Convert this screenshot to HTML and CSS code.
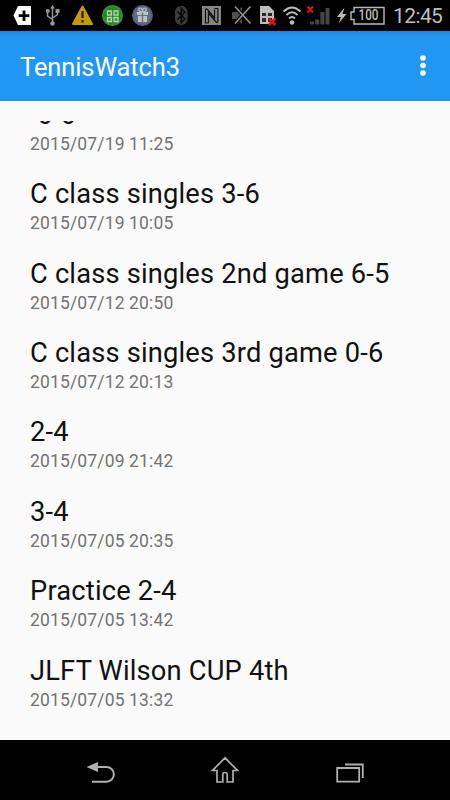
FILE: index.html
```html
<!DOCTYPE html>
<html lang="en">
<head>
<meta charset="utf-8">
<title>TennisWatch3</title>
<link rel="stylesheet" href="styles.css">
</head>
<body>
<div class="screen">
  <header class="status">
    <svg class="notifications" width="160" height="31" viewBox="0 0 160 31">
      <path d="M13.500 15.500 18 6H31V25H18Z" fill="#fff"/>
      <path d="M24 10.500V21M18.700 15.700H29.300" stroke="#000" stroke-width="2.800"/>
      <g stroke="#969696" stroke-width="1.500" fill="none">
        <path d="M52.500 7V23M47.500 11V16L52.500 19.500M57.500 11V14.500L52.500 18"/>
      </g>
      <path d="M50 8.500 52.500 5 55 8.500ZM55.500 9H59.500V13H55.500Z" fill="#969696"/>
      <circle cx="47.800" cy="11" r="2" fill="#969696"/><circle cx="52.500" cy="23.500" r="2.300" fill="#969696"/>
      <path d="M82.500 6.500 92 24H73Z" fill="#c49a06" stroke="#c49a06" stroke-width="2" stroke-linejoin="round"/>
      <path d="M82.500 11V18M82.500 20V22.500" stroke="#251d00" stroke-width="2.200"/>
      <defs>
        <radialGradient id="green"><stop offset="0" stop-color="#168c12"/><stop offset=".72" stop-color="#178c16"/><stop offset="1" stop-color="#498f48"/></radialGradient>
        <radialGradient id="gray"><stop offset="0" stop-color="#647089"/><stop offset=".7" stop-color="#667087"/><stop offset="1" stop-color="#4b5970"/></radialGradient>
      </defs>
      <circle cx="112.500" cy="15.500" r="10.500" fill="url(#green)"/>
      <path d="M107.500 11H111.500V15H107.500ZM114 11H118V15H114ZM107.500 17.500H111.500V21.500H107.500ZM114 17.500H118V21.500H114Z" fill="#289321" stroke="#bdd0bb" stroke-width="1.300"/>
      <circle cx="142.500" cy="15.500" r="10.500" fill="url(#gray)"/>
      <path d="M137 12H148V15H137ZM138 16H147V22H138Z" fill="#bfc1c6"/>
      <path d="M142.500 12V22" stroke="#69748a" stroke-width="1.500"/>
      <path d="M142.500 12C138 12 138 8 140 8S142.500 10 142.500 12C142.500 10 143 8 145 8S147 12 142.500 12" fill="none" stroke="#bfc1c6" stroke-width="1.200"/>
    </svg>
    <svg class="indicators" width="217" height="31" viewBox="170 0 217 31">
      <rect x="175" y="6" width="12.500" height="19" rx="6" fill="#3c3c3c"/>
      <path d="M177.500 11.500 185 19 181.200 22.500V8.500L185 12 177.500 19.500" fill="none" stroke="#080808" stroke-width="1.500"/>
      <rect x="202" y="6" width="19" height="19" fill="#858585"/>
      <path d="M208.500 23H205.500V9.500Q206 8 207.500 9.500L214.500 18V9.500M208.500 23V13L215.500 21.500Q217.500 23.500 217.800 21.500V8.500H214.500" fill="none" stroke="#101010" stroke-width="1.200"/>
      <path d="M232 12H236L242 7V24L236 19H232Z" fill="#505050"/>
      <path d="M235 6.500 250.500 23.500M250.500 6.500 235 23.500" stroke="#000" stroke-width="4"/>
      <path d="M235 6.500 250.500 23.500M250.500 6.500 235 23.500" stroke="#929292" stroke-width="1.700"/>
      <path d="M260 6H269L274 11V24H260Z" fill="#bcbcbc"/>
      <path d="M262 13H266V16H262ZM268 13H272V16H268ZM262 18H266V22H262ZM268 18H272V22H268Z" fill="#292929"/>
      <path d="M269 18.500 275.500 25M275.500 18.500 269 25" stroke="#d91414" stroke-width="2.500"/>
      <g fill="none" stroke="#bababa" stroke-width="2">
        <path d="M283.500 11.500Q292 3.500 300.500 11.500M286.500 15Q292 9.500 297.500 15M289 18.500Q292 15.500 295 18.500"/>
      </g>
      <circle cx="292" cy="22.500" r="2.300" fill="#bababa"/>
      <path d="M310 21.500H314V24.500H310ZM315.200 19.500H319.200V24.500H315.200ZM320.400 12H324.400V24.500H320.400ZM325.500 8H329.500V24.500H325.500Z" fill="#454545"/>
      <path d="M307.500 6.500 313 12.500M313 6.500 307.500 12.500" stroke="#e31414" stroke-width="2"/>
      <path d="M344.500 7.500 337 17H341L338.500 23.500 346.500 14H342.500Z" fill="#bcbcbc"/>
      <path d="M354 7.500H384V24H354V19.500H351V12H354Z" fill="none" stroke="#b8b8b8" stroke-width="1.400"/>
      <text class="battery" x="358.500" y="20" textLength="20" lengthAdjust="spacingAndGlyphs">100</text>
    </svg>
    <span class="clock">12:45</span>
  </header>
  <div class="toolbar">
    <h1>TennisWatch3</h1>
    <svg width="10" height="24" viewBox="0 0 10 24" fill="#fff"><circle cx="5" cy="4" r="2.800"/><circle cx="5" cy="11.500" r="2.800"/><circle cx="5" cy="19" r="2.800"/></svg>
  </div>
  <main class="content">
    <ul class="list">
      <li><h2> 6-6</h2><time>2015/07/19 11:25</time></li>
      <li><h2>C class singles 3-6</h2><time>2015/07/19 10:05</time></li>
      <li><h2>C class singles 2nd game 6-5</h2><time>2015/07/12 20:50</time></li>
      <li><h2>C class singles 3rd game 0-6</h2><time>2015/07/12 20:13</time></li>
      <li><h2>2-4</h2><time>2015/07/09 21:42</time></li>
      <li><h2>3-4</h2><time>2015/07/05 20:35</time></li>
      <li><h2>Practice 2-4</h2><time>2015/07/05 13:42</time></li>
      <li><h2>JLFT Wilson CUP 4th</h2><time>2015/07/05 13:32</time></li>
    </ul>
  </main>
  <nav class="nav">
    <svg width="30" height="30" viewBox="85 756 30 30"><path d="M92 767H106.500A7.200 7.200 0 0 1 106.500 781.700H92" fill="none" stroke="#b0b0b0" stroke-width="2"/><path d="M86.500 767 98 762V772Z" fill="#b0b0b0"/></svg>
    <svg width="30" height="30" viewBox="210 756 30 30"><path d="M225 757.800 212.500 770.500H217V782H222.800V774.500Q222.800 772.500 225 772.500T227.200 774.500V782H233V770.500H237.500Z" fill="none" stroke="#b0b0b0" stroke-width="1.700"/></svg>
    <svg width="30" height="30" viewBox="335 756 30 30"><path d="M337.200 768H359.200V781.700H337.200ZM345 764.500H362.800V778" fill="none" stroke="#b0b0b0" stroke-width="1.800"/></svg>
  </nav>
</div>
</body>
</html>
```
FILE: styles.css
```css
* { box-sizing: border-box; margin: 0; padding: 0; }
body { font-family: Roboto, sans-serif; background: #fafafa; }
svg { display: block; flex: none; }
.screen { width: 450px; height: 800px; display: flex; flex-direction: column; overflow: hidden; }
.status { height: 31px; flex: none; background: #000; display: flex; }
.indicators { margin-left: 10px; }
.battery { font: 500 14px Roboto, sans-serif; fill: #bcbcbc; }
.clock { margin-left: 6px; color: #bebebe; font-size: 21px; line-height: 32px; letter-spacing: -0.6px; }
.toolbar { height: 70px; flex: none; background: linear-gradient(#1b85d8, #2196f3 5px, #2196f3 69px, #1c8de8); display: flex; align-items: center; justify-content: space-between; padding: 0 22.5px 0 20px; color: #fff; }
.toolbar h1 { font-size: 25.5px; font-weight: 400; line-height: 32px; padding-top: 2px; letter-spacing: -0.1px; }
.content { flex: 1; min-height: 0; padding-top: 20px; background: #fafafa; }
.list { height: 619px; overflow: hidden; list-style: none; padding-left: 30px; display: flex; flex-direction: column; }
.list li { height: 79.4px; flex: none; }
.list li:first-child { margin-top: -24.2px; }
.list h2 { font-size: 27.3px; font-weight: 400; line-height: 36px; height: 36px; color: #111; white-space: pre; letter-spacing: 0.18px; }
.list time { display: block; font-size: 17.5px; line-height: 22px; color: #737373; letter-spacing: 0.15px; }
.nav { height: 60px; flex: none; background: #000; display: flex; justify-content: space-between; padding: 16px 85px 0; }
```
